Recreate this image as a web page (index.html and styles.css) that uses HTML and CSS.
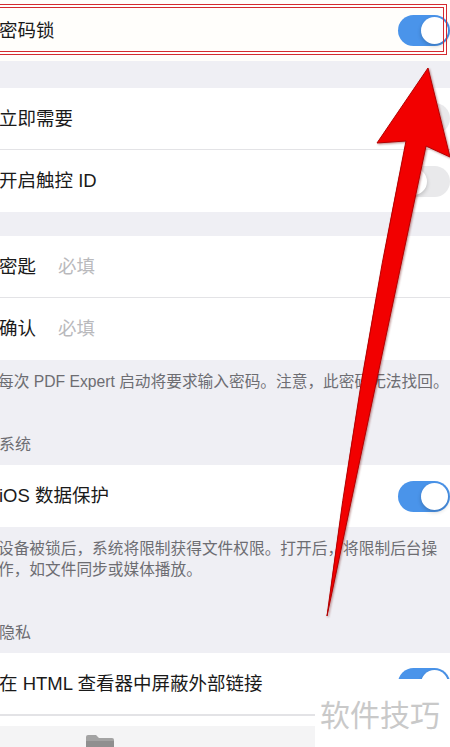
FILE: index.html
```html
<!DOCTYPE html>
<html lang="zh-CN">
<head>
    <meta charset="UTF-8">
    <meta name="viewport" content="width=device-width, initial-scale=1.0">
    <link rel="stylesheet" href="styles.css">
    <title>密码锁</title>
</head>
<body>
    <div class="screen">
        <div class="group group-first">
            <div class="row">
                <span class="label">密码锁</span>
                <span class="toggle on"></span>
            </div>
        </div>

        <div class="gap gap-28"></div>
        <div class="group">
            <div class="row">
                <span class="label">立即需要</span>
                <span class="toggle"></span>
            </div>
            <div class="row">
                <span class="label">开启触控 ID</span>
                <span class="toggle"></span>
            </div>
        </div>

        <div class="gap gap-24"></div>
        <div class="group">
            <div class="row">
                <span class="label key">密匙</span>
                <span class="placeholder">必填</span>
            </div>
            <div class="row">
                <span class="label key">确认</span>
                <span class="placeholder">必填</span>
            </div>
        </div>
        <p class="note">每次 PDF Expert 启动将要求输入密码。注意，此密码无法找回。</p>

        <div class="section-title">系统</div>
        <div class="group">
            <div class="row">
                <span class="label">iOS 数据保护</span>
                <span class="toggle on"></span>
            </div>
        </div>
        <p class="note">设备被锁后，系统将限制获得文件权限。打开后，将限制后台操作，如文件同步或媒体播放。</p>

        <div class="section-title">隐私</div>
        <div class="group">
            <div class="row">
                <span class="label">在 HTML 查看器中屏蔽外部链接</span>
                <span class="toggle on"></span>
            </div>
            <div class="row-stub"></div>
        </div>

        <div class="tabbar">
            <svg class="folder" width="30" height="20" viewBox="0 0 30 20">
                <path d="M1 3 Q1 1 3 1 L11 1 L14 4 L27 4 Q29 4 29 6 L29 20 L1 20 Z" fill="#a3a3a3"/>
                <path d="M1 7 L29 7 L29 20 L1 20 Z" fill="#8f8f8f"/>
            </svg>
        </div>

        <!-- annotations drawn over the screenshot -->
        <div class="highlight"></div>
        <svg class="arrow" width="450" height="747" viewBox="0 0 450 747">
            <defs>
                <filter id="shade" x="-20%" y="-10%" width="140%" height="120%">
                    <feDropShadow dx="1" dy="1" stdDeviation="1.2" flood-color="#600" flood-opacity="0.45"/>
                </filter>
            </defs>
            <path d="M428 68 L450 157 L426 146 L327 616 Q356 387 406 141 L377 143 Z"
                  fill="#f20000" stroke="#b30000" stroke-width="1" stroke-linejoin="round" filter="url(#shade)"/>
        </svg>
        <div class="watermark">软件技巧</div>
    </div>
</body>
</html>
```

FILE: styles.css
```css
* {
    box-sizing: border-box;
}

body {
    margin: 0;
    font-family: "Liberation Sans", "Noto Sans CJK SC", sans-serif;
    color: #1a1a1a;
}

.screen {
    position: relative;
    width: 450px;
    height: 747px;
    overflow: hidden;
    background: #efeff4;
}

.group {
    background: #fff;
}

.group-first {
    background: #fffefb;
}

.row {
    display: flex;
    align-items: center;
    height: 62px;
    border-bottom: 1px solid #e3e3e6;
}

.group-first .row {
    height: 61px;
    border-bottom: none;
}

.group .row:last-child {
    border-bottom: none;
}

.row-stub {
    height: 11px;
    border-top: 1px solid #e3e3e6;
    width: 315px;
}

.label {
    font-size: 18.5px;
    line-height: 24px;
    margin-left: -1px;
    flex: 1;
}

.label.key {
    flex: 0 0 59px;
}

.placeholder {
    font-size: 18.5px;
    line-height: 24px;
    color: #b9b9bc;
}

.toggle {
    position: relative;
    width: 52px;
    height: 31px;
    border-radius: 16px;
    background: #e9e9eb;
    flex: 0 0 auto;
}

.toggle::after {
    content: "";
    position: absolute;
    top: 2px;
    left: 2px;
    width: 27px;
    height: 27px;
    border-radius: 50%;
    background: #fff;
    box-shadow: 0 2px 4px rgba(0, 0, 0, 0.2);
}

.toggle.on {
    background: #4a94ea;
}

.toggle.on::after {
    left: 23px;
}

.gap-28 {
    height: 27px;
}

.gap-24 {
    height: 24px;
}

.note {
    margin: 0 0 0 -2px;
    padding: 11px 0;
    font-size: 15.7px;
    line-height: 21px;
    color: #6d6d72;
}

.section-title {
    height: 62px;
    display: flex;
    align-items: flex-end;
    padding-bottom: 10px;
    margin-left: -1px;
    font-size: 16px;
    line-height: 21px;
    color: #6d6d72;
}

.tabbar {
    height: 30px;
    width: 315px;
    background: #f4f4f5;
    padding: 8px 0 0 85px;
}

.folder {
    display: block;
}

.highlight {
    position: absolute;
    left: -6px;
    top: 4px;
    width: 453px;
    height: 51px;
    border: 4px double #d42a30;
}

.arrow {
    position: absolute;
    left: 0;
    top: 0;
    pointer-events: none;
}

.watermark {
    position: absolute;
    left: 315px;
    top: 679px;
    width: 135px;
    height: 68px;
    background: #fff;
    padding: 16px 0 0 5px;
    font-family: "Noto Sans CJK SC", sans-serif;
    font-size: 30px;
    line-height: 36px;
    color: #c9c9c9;
}
```
